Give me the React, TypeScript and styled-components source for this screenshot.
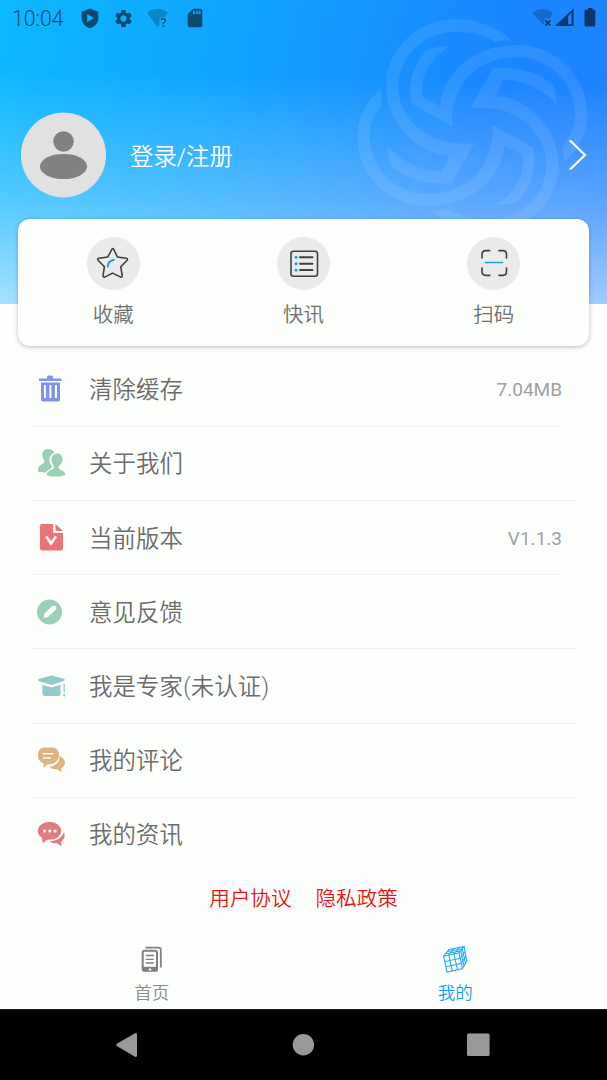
import React from "react";
import styled, { createGlobalStyle } from "styled-components";
import { MdSettings, MdSdCard } from "react-icons/md";

const GlobalStyle = createGlobalStyle`
  * { box-sizing: border-box; }
  body {
    margin: 0;
    background: #fdfffc;
    font-family: Roboto, "Noto Sans CJK SC", sans-serif;
    font-weight: 350;
  }
  svg { display: block; }
`;

const Screen = styled.div`
  width: 607px;
  height: 1080px;
  display: flex;
  flex-direction: column;
  overflow: hidden;
  background: #fdfffc;
`;

const Header = styled.header`
  position: relative;
  flex: none;
  height: 304px;
  background:
    linear-gradient(181deg, rgba(255, 255, 255, 0) 26%, rgba(255, 255, 255, 0.28) 65%, rgba(255, 255, 255, 0.62) 100%),
    linear-gradient(102deg, #0bb8ff 0%, #10a4ff 36%, #1a88ff 72%, #1e80ff 100%);
`;

const Emblem = styled.svg`
  position: absolute;
  left: 340px;
  top: 0;
`;

const StatusBar = styled.div`
  position: relative;
  display: flex;
  justify-content: space-between;
  height: 36px;
  padding: 0 10px 0 12px;
  color: #0a4a70;
`;

const StatusGroup = styled.div<{ $gap: number }>`
  display: flex;
  align-items: center;
  gap: ${(p) => p.$gap}px;
`;

const Clock = styled.span`
  width: 54px;
  margin-right: 1px;
  font-size: 21.2px;
  line-height: 36px;
  padding-top: 1px;
`;

const Profile = styled.div`
  position: relative;
  display: flex;
  align-items: center;
  height: 86px;
  margin-top: 76px;
  padding: 0 20px 0 21px;
`;

const ProfileName = styled.span`
  flex: 1;
  margin-left: 24px;
  padding-top: 3px;
  font-size: 23.4px;
  line-height: 34px;
  color: #fff;
`;

const Card = styled.section`
  position: relative;
  display: flex;
  height: 127px;
  margin: 21px 18px 0;
  border-radius: 12px;
  background: #fdfffc;
  box-shadow: 0 1px 4px rgba(60, 50, 70, 0.35);
`;

const Shortcut = styled.div`
  flex: 1;
  display: flex;
  flex-direction: column;
  align-items: center;
  padding-top: 18px;
`;

const ShortcutDisc = styled.div`
  width: 53px;
  height: 53px;
  border-radius: 50%;
  background: #ebebeb;
`;

const ShortcutLabel = styled.span`
  margin-top: 10px;
  font-size: 20.5px;
  line-height: 30px;
  color: #707070;
`;

const Menu = styled.ul`
  flex: none;
  list-style: none;
  margin: 48.6px 30px 0;
  padding: 0;
`;

const MenuRow = styled.li<{ $inset?: boolean; $last?: boolean }>`
  display: flex;
  align-items: center;
  height: 74.2px;
  margin-right: ${(p) => (p.$inset ? 15 : 0)}px;
  border-bottom: 1px solid ${(p) => (p.$last ? "transparent" : "#f0f2ef")};
`;

const MenuIcon = styled.svg`
  flex: none;
  margin-left: 4px;
`;

const MenuLabel = styled.span`
  flex: 1;
  margin-left: 21px;
  padding-top: 2px;
  font-size: 23.4px;
  letter-spacing: 0.15px;
  line-height: 34px;
  color: #6c6c6c;
`;

const MenuValue = styled.span`
  padding-top: 1px;
  font-size: 19px;
  font-weight: 400;
  color: #a0a0a0;
`;

const Policies = styled.div`
  display: flex;
  justify-content: center;
  gap: 24px;
  margin-top: 12px;
  font-size: 20.6px;
  line-height: 30px;
  color: #f01414;
`;

const Tabs = styled.nav`
  display: flex;
  height: 74px;
  margin-top: auto;
`;

const Tab = styled.div<{ $active?: boolean }>`
  flex: 1;
  display: flex;
  flex-direction: column;
  align-items: center;
  padding-top: 8px;
  font-size: 17.6px;
  line-height: 26px;
  color: ${(p) => (p.$active ? "#119dfb" : "#8c8c8c")};
  gap: 3px;
`;

const SystemNav = styled.div`
  flex: none;
  height: 71px;
  background: #020003;
  border-top: 1px solid #222;
`;

/* One curved arm pair; the emblem is this pair plus its half-turn copy. */
const Arms = () => (
  <>
    <path d="M517 122C470 80 410 58 348 58C230 58 138 152 138 255C138 340 185 400 235 435C270 458 305 466 328 465L305 515C250 515 190 490 142 440L152 497C195 535 260 555 335 550L403 430C370 432 325 431 285 415C215 385 175 325 175 260C175 170 250 95 350 95C395 95 435 105 468 128C480 124 500 121 517 122Z" />
    <path d="M672 486C715 450 742 400 742 345C742 225 645 135 530 135C405 135 310 215 300 318L247 290C240 235 260 185 325 140C300 139 275 143 258 152C215 200 203 260 216 312L338 380C335 355 335 340 342 315C360 230 430 172 530 172C630 172 705 250 705 345C705 380 690 412 669 438Z" />
  </>
);

const shortcuts = [
  {
    label: "收藏",
    art: (
      <g transform="translate(-1 -0.5)">
        <path d="M26 12.6q.8-1.2 1.6 0l3.800 7.900 9 1.300q1.700.5.7 1.900l-6.300 6.500 1.400 9.100q0 1.700-1.600 1.300l-8-4-8 4q-1.600.4-1.600-1.300l1.400-9.100-6.300-6.500q-1-1.400.7-1.900l9-1.300z" />
        <path d="M21.800 30q.2-5.800 6-6.400" stroke="#1b9fd8" strokeWidth="2" />
      </g>
    ),
  },
  {
    label: "快讯",
    art: (
      <>
        <rect x="14" y="14.300" width="26.500" height="25" rx="2.500" />
        <path d="M23 20.300h12.500M23 26.700h12.500M23 33.100h12.500" strokeWidth="2" />
        <path d="M19 20.300h.1M19 26.700h.1M19 33.100h.1" stroke="#1b9fd8" strokeWidth="3" />
      </>
    ),
  },
  {
    label: "扫码",
    art: (
      <>
        <path d="M15 21v-3.600q0-3.800 3.800-3.800h4M32 13.600h4q3.500 0 3.500 3.800V21M39.500 31v3.600q0 3.800-3.500 3.800h-4M22.800 38.400h-4q-3.800 0-3.800-3.800V31" />
        <path d="M18.500 25.500h17" stroke="#1b9fd8" />
      </>
    ),
  },
];

const menu = [
  {
    label: "清除缓存",
    value: "7.04MB",
    inset: true,
    art: (
      <g fill="#8292e6">
        <path d="M4 5h8V3.500Q12 2 13.500 2h3Q18 2 18 3.500V5h8.500v2.400H4z" />
        <path fillRule="evenodd" d="M6 9h19v17q0 2-2 2H8q-2 0-2-2zm3 2.500v13h1.900v-13zm5.400 0v13h2v-13zm5.500 0v13H22v-13z" />
      </g>
    ),
  },
  {
    label: "关于我们",
    art: (
      <g fill="#9bcfb3">
        <path d="M13 1.500c-4 0-6 3-5.600 6.500.3 3 1.700 4.500 2 6 .4 2.500-6 3-6.400 7.500L3 24c3 .8 5.500 1 8 .9 2-3 6-3.600 6-5.900-2-3-3.500-6-2-9.500 1-2.500 2.500-3.500 4.500-4C18.500 3 16 1.500 13 1.500z" />
        <path d="M22.500 6c-4 0-6.400 3-6 7 .3 3.500 2.500 5 2.500 7 0 2.500-7.300 2.500-7.300 7.200 0 2.400 18.300 2.400 18.600 0 0-4.700-6.800-4.700-6.800-7.200 0-2 3.700-3.500 4-7 .3-4-1.500-7-5-7z" />
      </g>
    ),
  },
  {
    label: "当前版本",
    value: "V1.1.3",
    inset: true,
    art: (
      <>
        <path d="M7 1.500h11V9q0 1.500 1.500 1.500H28V26q0 2-2 2H7q-2 0-2-2V3.500q0-2 2-2z" fill="#e97579" />
        <path d="M20.500 1.500l7.500 7h-5.500q-2 0-2-2z" fill="#e97579" />
        <path d="M11.300 14l4.700 7 5-7" fill="none" stroke="#fff" strokeWidth="2.500" />
      </>
    ),
  },
  {
    label: "意见反馈",
    art: (
      <>
        <circle cx="14.500" cy="15.500" r="12.500" fill="#9bcfb3" />
        <path d="M8.500 21.600l1-4.600 7.800-7.500q2.200-1.300 3.600.2 1.300 1.700-.1 3.500l-7.800 7.400z" fill="#fff" />
      </>
    ),
  },
  {
    label: "我是专家(未认证)",
    art: (
      <g fill="#92cbc9">
        <path d="M3 9.500q0-.7 1.400-1.300L16.600 5l12.200 3.200q2 .8 0 2.200l-12.200 4L4 10.800Q3 10.300 3 9.500z" />
        <path d="M7.400 14.200l9.200 2.800 9-2.800v9.300q0 2-2.500 2H10q-2.600 0-2.600-2zM28.500 13h1.300v9h-1.300zM28.200 23.600h2v2.300h-2z" />
      </g>
    ),
  },
  {
    label: "我的评论",
    art: (
      <>
        <path d="M24.500 11.500c8 4 6 10 1.800 12.200l.2 4-4.500-3c-4 .3-6-1-7.400-2.500 6-.4 10.400-5 9.900-10.700z" fill="#dfb280" />
        <path d="M9.500 3h7.800c4 0 6.800 3 6.800 7.500s-3.500 8.500-8 9l-3.600.2-4 3.800.2-4.700C4.800 17.500 3 14.500 3 11c0-5 2.500-8 6.500-8z" fill="#dfb280" />
        <path d="M7.500 9.200h11M8 13.500h8" stroke="#fff" strokeWidth="1.500" />
      </>
    ),
  },
  {
    label: "我的资讯",
    art: (
      <>
        <path d="M29 13.500c1.500 4 .2 7.500-2.800 9.800l.3 4.400-4.500-3c-3.500.2-5.500-.5-7.400-2 7 0 12.400-3.700 14.400-9.200z" fill="#df7d80" />
        <ellipse cx="14.500" cy="12.300" rx="11.700" ry="9" fill="#df7d80" />
        <path d="M7 18l.6 6.700 6-4.500z" fill="#df7d80" />
        <path d="M9.500 12.500h.1M14.800 12.500h.1M20 12.500h.1" stroke="#fff" strokeWidth="3" strokeLinecap="round" />
      </>
    ),
  },
];

export default function App() {
  return (
    <Screen>
      <GlobalStyle />
      <Header>
        <Emblem width="267" height="220" viewBox="0 0 801 660" fill="#fff" fillOpacity="0.085">
          <Arms />
          <g transform="rotate(180 397 377)">
            <Arms />
          </g>
        </Emblem>
        <StatusBar>
          <StatusGroup $gap={14}>
            <Clock>10:04</Clock>
            <svg width="18" height="21" viewBox="0 0 18 21">
              <path fillRule="evenodd" fill="currentColor" d="M9 .5l8.300 3.200v6.500c0 4.800-3.600 8.800-8.300 10-4.700-1.200-8.300-5.200-8.300-10V3.700zM6.200 6v8.200l6.700-4.100z" />
            </svg>
            <MdSettings size={21} />
            <svg width="22" height="20" viewBox="1 0 22 20">
              <path d="M0 4.500Q10.500-3 21 4.500L17.500 9q-4-.6-5.200 3v5.500L10.500 19z" fill="#0a86c6" />
              <text x="13.500" y="18.500" fontSize="12.500" fontWeight="500" fill="currentColor">?</text>
            </svg>
            <MdSdCard size={22} />
          </StatusGroup>
          <StatusGroup $gap={0}>
            <svg width="65" height="24" viewBox="0 0 65 24">
              <path d="M0 7Q10.500-1.200 21 7l-3.500 5.500h-5.300V19.500z" fill="#126bc8" />
              <path d="M13.300 14.300l5 5m0-5l-5 5" stroke="#0c3768" strokeWidth="1.900" />
              <path fillRule="evenodd" d="M23 20L41.600 2.500V20zm13.200-10v8.300h3.300V6.500z" fill="#0c3768" />
              <path d="M56 2h4.500v1.800H62q1.300 0 1.300 1.200v14q0 1.400-1.300 1.400h-8Q52.500 20.400 52.500 19V5q0-1.200 1.500-1.200h2z" fill="#0c3768" />
            </svg>
          </StatusGroup>
        </StatusBar>
        <Profile>
          <svg width="85" height="86" viewBox="0 0 85 86">
            <circle cx="42.500" cy="43" r="42.600" fill="#e1e1e2" />
            <circle cx="42.500" cy="29.500" r="10.300" fill="#818181" />
            <ellipse cx="42.500" cy="54.500" rx="23.600" ry="12.600" fill="#818181" />
          </svg>
          <ProfileName>登录/注册</ProfileName>
          <svg width="18" height="32" viewBox="0 0 18 32" fill="none" stroke="#fff" strokeWidth="2.200">
            <path d="M1.500 2L16 16 1.500 30" strokeLinecap="round" />
          </svg>
        </Profile>
        <Card>
          {shortcuts.map((s) => (
            <Shortcut key={s.label}>
              <ShortcutDisc>
                <svg width="53" height="53" viewBox="0 0 53 53" fill="none" stroke="#404040" strokeWidth="1.600" strokeLinecap="round">
                  {s.art}
                </svg>
              </ShortcutDisc>
              <ShortcutLabel>{s.label}</ShortcutLabel>
            </Shortcut>
          ))}
        </Card>
      </Header>
      <Menu>
        {menu.map((m, i) => (
          <MenuRow key={m.label} $inset={m.inset} $last={i === menu.length - 1}>
            <MenuIcon width="34" height="30" viewBox="-1 0.5 34 30">{m.art}</MenuIcon>
            <MenuLabel>{m.label}</MenuLabel>
            {m.value && <MenuValue>{m.value}</MenuValue>}
          </MenuRow>
        ))}
      </Menu>
      <Policies>
        <span>用户协议</span>
        <span>隐私政策</span>
      </Policies>
      <Tabs>
        <Tab>
          <svg width="24" height="34" viewBox="0 -1 24 34" fill="none" stroke="#808080">
            <path d="M5.500 3.700h13q2.300 0 2.300 2.300v17.500" strokeWidth="1.800" />
            <rect x="2.700" y="6.800" width="14.300" height="20" rx="2" strokeWidth="2" />
            <path d="M2.500 25h15" strokeWidth="4.500" />
            <path d="M8.800 25.500h2.400" stroke="#fff" strokeWidth="2" />
            <path d="M5.800 11.500h8M5.800 15.300h8M5.800 19h8" strokeWidth="1.300" />
          </svg>
          首页
        </Tab>
        <Tab $active>
          <svg width="26" height="34" viewBox="0 -1 26 34" fill="none" stroke="#27a8f7" strokeWidth="1.100">
            <path d="M1.600 12.200L17 9l3.500 15.500L5 28zM6.800 11.100l3.400 15.700M12 10l3.400 15.600M2.800 17.500l15.400-3.300M3.900 22.700l15.400-3.300" />
            <path d="M1.600 12.200L7 5.500 22 2.500 17 9M3.500 9.800l15.200-3M5.300 7.500l15-2.800M6.800 11.100L12 4.500M12 10l5-6.500" />
            <path d="M22 2.500L24.800 17l-4.300 7.500M18.700 6.800l3.200 15M20.300 4.700l3.100 14.800M18.200 14.200L23 7.500M19.300 19.400l4.600-7" />
          </svg>
          我的
        </Tab>
      </Tabs>
      <SystemNav>
        <svg width="607" height="70" viewBox="0 0 607 70" fill="#999">
          <path d="M116.800 33.700L135 23.300q2-.8 2 1.200v21q0 2-2 1.200L116.800 36q-1.500-1.200 0-2.300z" />
          <circle cx="303.400" cy="34.700" r="10.700" />
          <rect x="467" y="23.500" width="22.600" height="22.500" rx="1.500" />
        </svg>
      </SystemNav>
    </Screen>
  );
}
